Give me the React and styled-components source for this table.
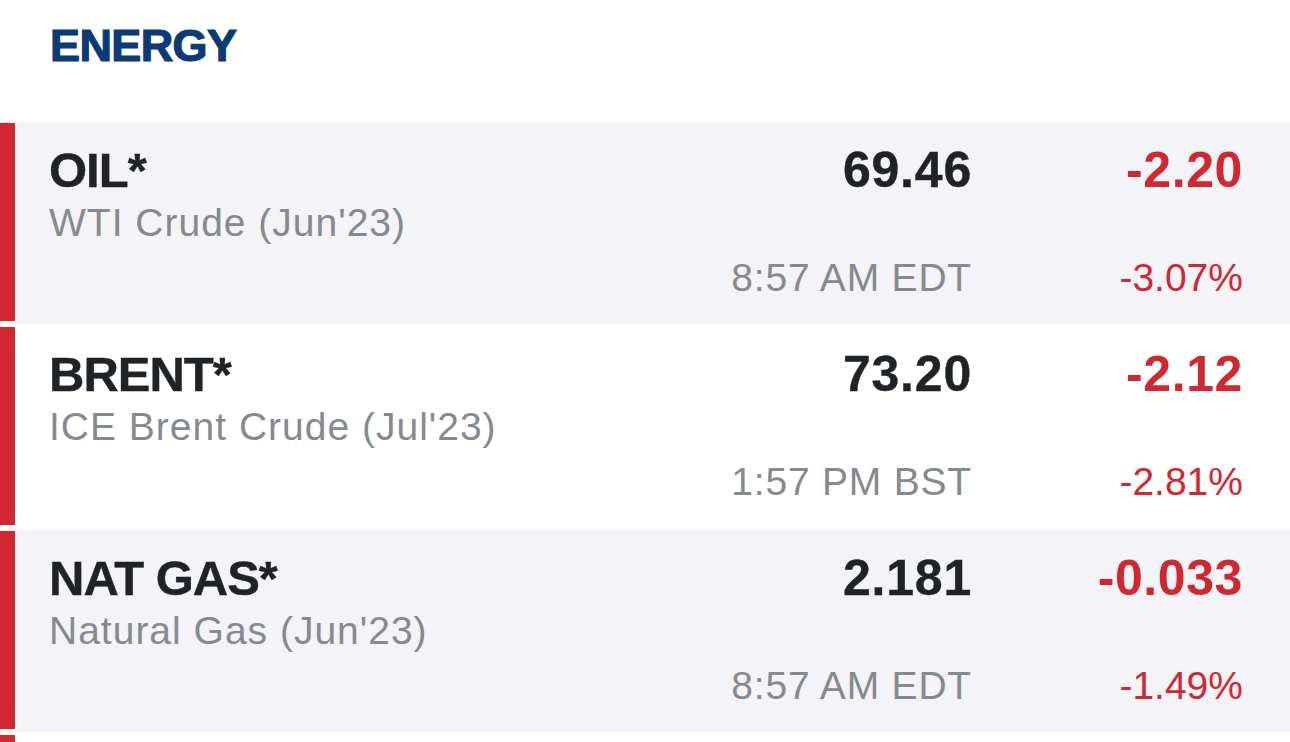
import React from "react";
import styled, { createGlobalStyle } from "styled-components";

const GlobalStyle = createGlobalStyle`
  html, body {
    margin: 0;
    padding: 0;
    background: #ffffff;
  }
  body {
    font-family: "Liberation Sans", Arial, sans-serif;
    -webkit-font-smoothing: antialiased;
    overflow: hidden;
  }
`;

const quotes = [
  {
    symbol: "OIL*",
    name: "WTI Crude (Jun'23)",
    price: "69.46",
    change: "-2.20",
    pct: "-3.07%",
    time: "8:57 AM EDT",
  },
  {
    symbol: "BRENT*",
    name: "ICE Brent Crude (Jul'23)",
    price: "73.20",
    change: "-2.12",
    pct: "-2.81%",
    time: "1:57 PM BST",
  },
  {
    symbol: "NAT GAS*",
    name: "Natural Gas (Jun'23)",
    price: "2.181",
    change: "-0.033",
    pct: "-1.49%",
    time: "8:57 AM EDT",
  },
];

export default function App() {
  return (
    <>
      <GlobalStyle />
      <Page>
        <Header>
          <h1>ENERGY</h1>
        </Header>
        <List>
          {quotes.map((q, i) => (
            <Row key={q.symbol} $shaded={i % 2 === 0}>
              <Accent />
              <Body>
                <Symbol>{q.symbol}</Symbol>
                <Price>{q.price}</Price>
                <Change $down={q.change.startsWith("-")}>{q.change}</Change>
                <Name>{q.name}</Name>
                <Time>{q.time}</Time>
                <Pct $down={q.pct.startsWith("-")}>{q.pct}</Pct>
              </Body>
            </Row>
          ))}
          {/* next item, scrolled below the fold */}
          <Row>
            <Accent />
          </Row>
        </List>
      </Page>
    </>
  );
}

const Page = styled.div`
  width: 1290px;
  height: 742px;
  overflow: hidden;
  background: #ffffff;
`;

const Header = styled.div`
  box-sizing: border-box;
  height: 122px;
  padding: 20px 0 0 50px;
  h1 {
    margin: 0;
    font-size: 45px;
    line-height: 52px;
    font-weight: 900;
    color: #0b3a74;
    letter-spacing: -0.6px;
    -webkit-text-stroke: 1.2px #0b3a74;
  }
`;

const List = styled.div`
  display: flex;
  flex-direction: column;
  gap: 2px;
`;

const Row = styled.div`
  display: flex;
  min-height: 202px;
  background-color: ${(p) => (p.$shaded ? "#f3f3f8" : "#ffffff")};
`;

const Accent = styled.div`
  flex: 0 0 15px;
  margin: 1px 0 3px;
  background-color: #d1282f;
`;

const Body = styled.div`
  flex: 1;
  display: grid;
  grid-template-columns: 1fr auto 271px;
  grid-template-rows: 56px 50px 55px;
  align-items: end;
  padding: 20px 47px 21px 34px;
`;

const Symbol = styled.div`
  grid-column: 1;
  grid-row: 1;
  font-size: 49px;
  line-height: 56px;
  font-weight: 700;
  letter-spacing: -1px;
  color: #1f2227;
  -webkit-text-stroke: 0.4px #1f2227;
`;

const Price = styled.div`
  grid-column: 2;
  grid-row: 1;
  text-align: right;
  font-size: 50px;
  line-height: 56px;
  font-weight: 700;
  color: #1f2227;
  letter-spacing: 0.8px;
  -webkit-text-stroke: 0.4px #1f2227;
`;

const Change = styled.div`
  grid-column: 3;
  grid-row: 1;
  text-align: right;
  font-size: 50px;
  line-height: 56px;
  font-weight: 700;
  color: ${(p) => (p.$down ? "#d1282f" : "#1a8a3a")};
  letter-spacing: 0.6px;
`;

const Name = styled.div`
  grid-column: 1 / span 2;
  grid-row: 2;
  font-size: 39px;
  line-height: 50px;
  color: #86898d;
  letter-spacing: 1px;
`;

const Time = styled.div`
  grid-column: 2;
  grid-row: 3;
  text-align: right;
  font-size: 39px;
  line-height: 50px;
  color: #86898d;
  letter-spacing: 0.8px;
  white-space: nowrap;
`;

const Pct = styled.div`
  grid-column: 3;
  grid-row: 3;
  text-align: right;
  font-size: 39px;
  line-height: 50px;
  color: ${(p) => (p.$down ? "#d1282f" : "#1a8a3a")};
`;
